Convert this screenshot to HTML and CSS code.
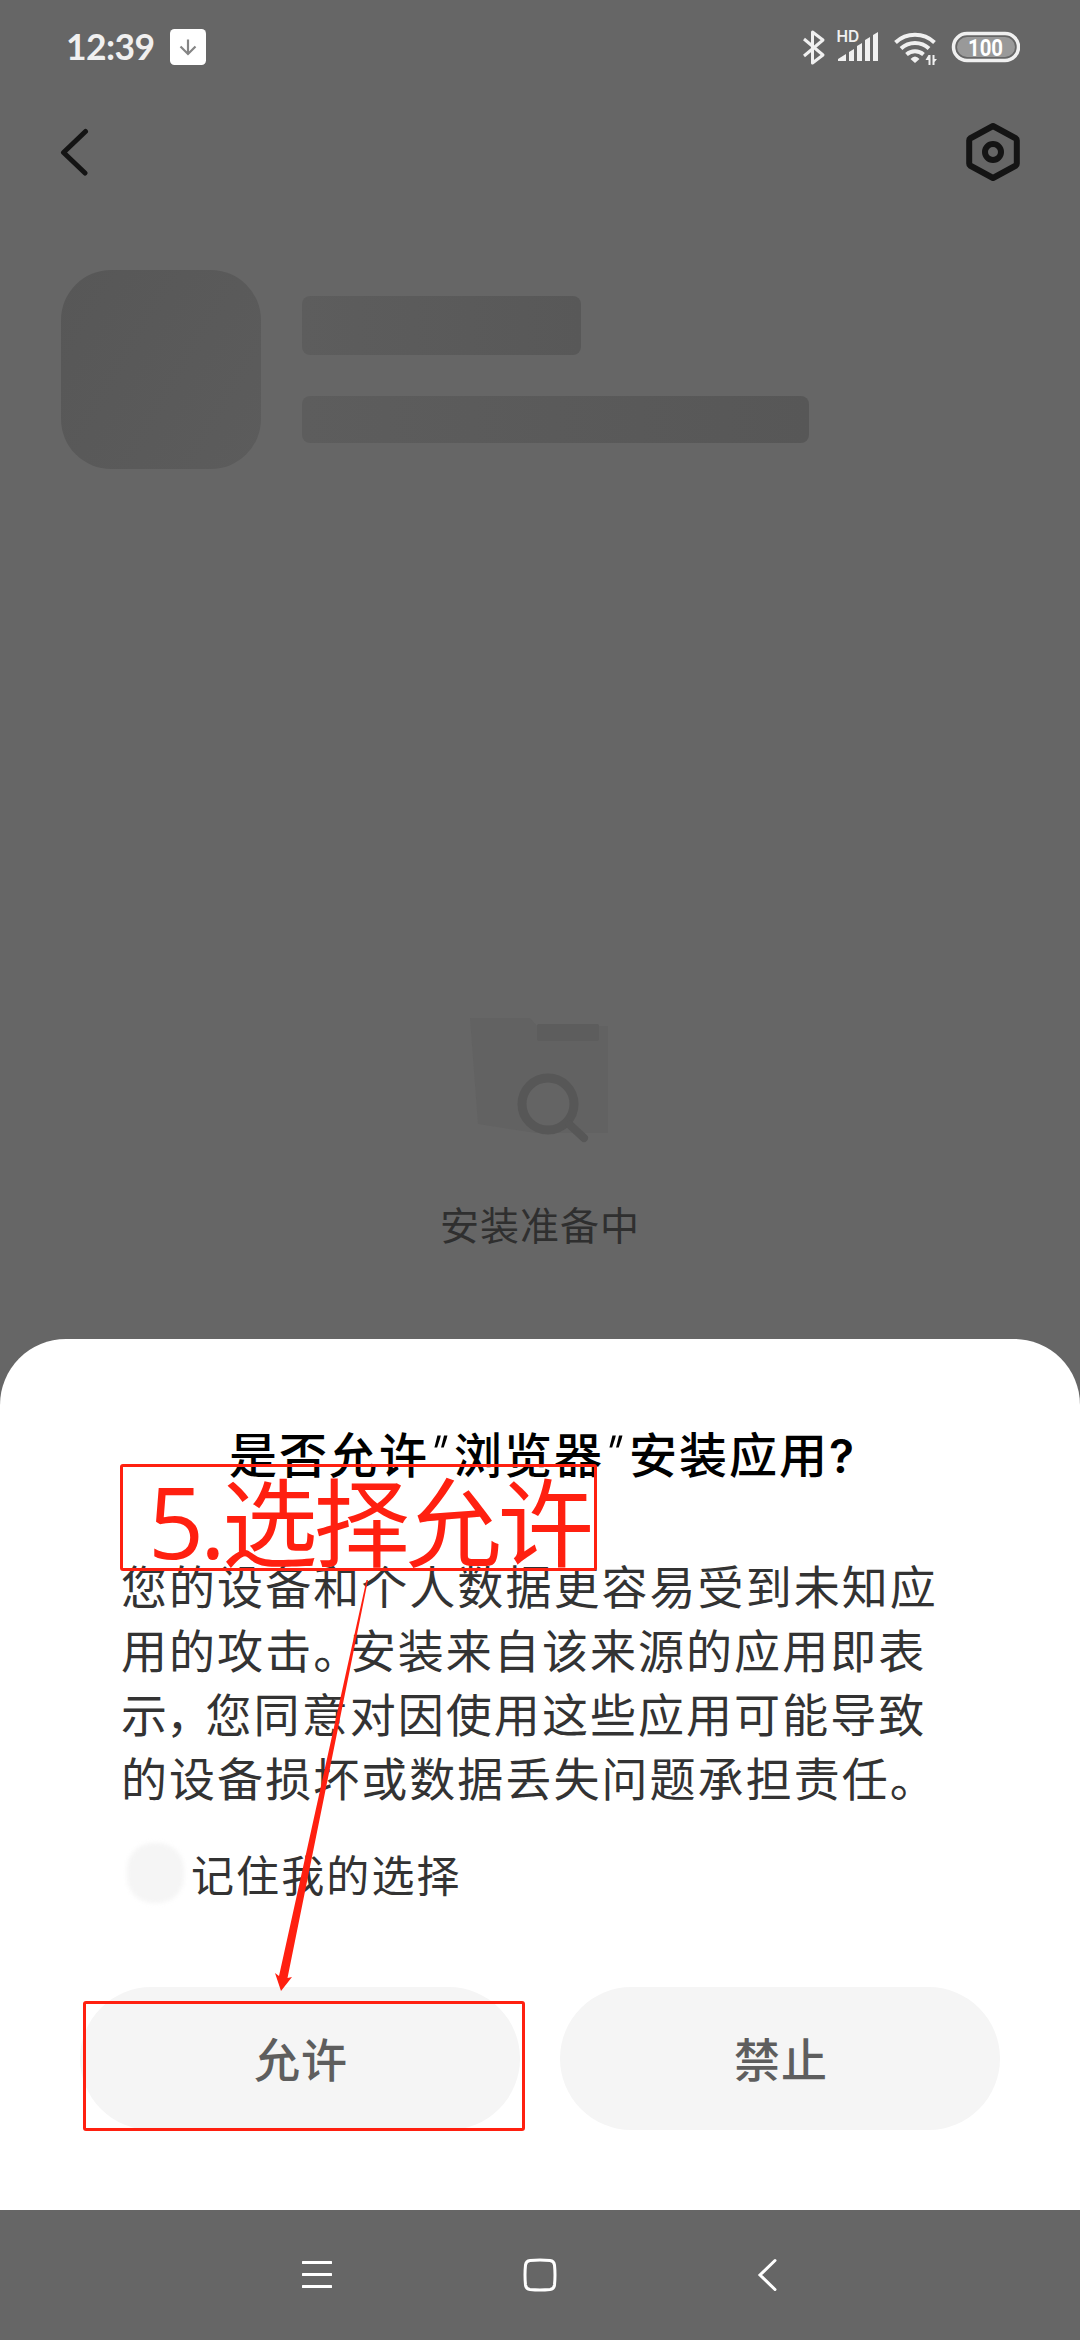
FILE: index.html
```html
<!DOCTYPE html>
<html lang="zh-CN">
<head>
<meta charset="utf-8">
<title>安装应用</title>
<link rel="stylesheet" href="styles.css">
</head>
<body>
<div class="screen">
  <header class="status">
    <span class="clock">12:39</span>
    <svg class="download" width="36" height="36" viewBox="0 0 36 36"><rect width="36" height="36" rx="4.5" fill="#fff"/><path d="M18 10.500V25M10.500 17.500L18 25l7.500-7.500" fill="none" stroke="#858585" stroke-width="2.200"/></svg>
    <svg class="signals" width="220" height="40" viewBox="800 26 220 40">
      <path d="M804 39l19 16-10.500 8V32L823 40 804 56" fill="none" stroke="#f0f0f0" stroke-width="3" stroke-linejoin="round"/>
      <text class="hd" x="836.500" y="41.500">HD</text>
      <path d="M838 61v-2l8-5v7zM849 61v-9l5-3v12zM857 61V46l5-3v18zM865 61V40l5-3v24zM873 61V35l5-3v29z" fill="#f0f0f0"/>
      <g fill="none" stroke="#f0f0f0" stroke-width="4"><path d="M895.500 42.500a28.500 28.500 0 0 1 39 0"/><path d="M901 48.500a20.500 20.500 0 0 1 28 0"/><path d="M906.500 54.500a13 13 0 0 1 17 0"/></g>
      <path d="M910.500 59q4.500-5 9 0l-4.500 4zM928.500 55h2v10h-2v-5h-3zM932.500 55h2v4h2.500l-2.500 3v3h-2z" fill="#f0f0f0"/>
      <rect x="953.500" y="33.500" width="65" height="27" rx="13.500" fill="none" stroke="#f0f0f0" stroke-width="3.500"/>
      <rect x="957" y="37" width="58" height="20" rx="10" fill="#999"/>
      <text class="charge" x="968" y="55.500" textLength="35" lengthAdjust="spacingAndGlyphs">100</text>
    </svg>
  </header>
  <nav class="toolbar">
    <svg width="30" height="50" viewBox="60 127 30 50"><path d="M85.500 131.500L63.500 152.500l21.500 20.500" fill="none" stroke="#141414" stroke-width="5" stroke-linecap="round" stroke-linejoin="round"/></svg>
    <svg width="56" height="60" viewBox="965 122 56 60"><g fill="none" stroke="#141414"><path d="M993 126l23 12.500q.8.500.8 2v23q0 1.500-.8 2L993 178l-23-12.500q-.8-.5-.8-2v-23q0-1.500.8-2z" stroke-width="6" stroke-linejoin="round"/><circle cx="993" cy="152" r="8" stroke-width="6"/></g></svg>
  </nav>
  <section class="app">
    <div class="app-icon"></div>
    <div class="app-lines"><div class="app-name"></div><div class="app-meta"></div></div>
  </section>
  <section class="progress">
    <svg width="180" height="150" viewBox="450 1000 180 150">
      <path d="M470 1018h60l7 8h71v107H536l-58-9z" fill="#626262"/>
      <rect x="537" y="1024" width="62" height="17" rx="2" fill="#5d5d5d"/>
      <circle cx="548" cy="1104" r="26" fill="#646464" stroke="#575757" stroke-width="9"/>
      <path d="M570 1125l14 13" stroke="#575757" stroke-width="8" stroke-linecap="round"/>
    </svg>
    <p>安装准备中</p>
  </section>
  <main class="sheet">
    <h1 class="title">是否允许<span class="quote">"</span>浏览器<span class="quote">"</span>安装应用<span class="ask">?</span></h1>
    <p class="message">您的设备和个人数据更容易受到未知应<br>用的攻击<span class="punct">。</span>安装来自该来源的应用即表<br>示<span class="punct comma">，</span>您同意对因使用这些应用可能导致<br>的设备损坏或数据丢失问题承担责任<span class="punct">。</span></p>
    <label class="remember"><span class="check"></span><span>记住我的选择</span></label>
    <div class="actions"><button>允许</button><button>禁止</button></div>
  </main>
  <footer class="navbar">
    <svg width="30" height="34" viewBox="302 2258 30 34"><path d="M303 2262.500h28M303 2274.500h28M303 2286.500h28" stroke="#fff" stroke-width="3" stroke-linecap="round"/></svg>
    <svg width="34" height="34" viewBox="523 2258 34 34"><path d="M530 2260.500q10-1 20 0 4 .5 4.500 4.500 1 10 0 20-.5 4-4.500 4.500-10 1-20 0-4-.5-4.500-4.500-1-10 0-20 .5-4 4.500-4.500z" fill="none" stroke="#fff" stroke-width="3"/></svg>
    <svg width="20" height="34" viewBox="757 2258 20 34"><path d="M775 2260.500L760 2275l15 14.500" fill="none" stroke="#fff" stroke-width="3" stroke-linecap="round"/></svg>
  </footer>
  <div class="step"><span class="num">5.</span>选择允许</div>
  <div class="target"></div>
  <svg class="arrow" width="110" height="420" viewBox="270 1575 110 420"><path d="M366.500 1580h1.500L287.500 1978l4.500-1-11 14-6-18 4 3z" fill="#ff2010"/></svg>
</div>
</body>
</html>
```
FILE: styles.css
```css
* { box-sizing: border-box; }
body { margin: 0; font-family: "Noto Sans CJK SC", sans-serif; }
h1, p { margin: 0; }
.screen { position: relative; width: 1080px; height: 2340px; display: flex; flex-direction: column; background: #666; overflow: hidden; }
.status { display: flex; height: 96px; padding: 26px 60px 0 66px; align-items: flex-start; }
.clock { width: 104px; font: 700 35.5px/42px Lato, sans-serif; letter-spacing: -0.6px; color: #f0f0f0; }
.download { margin-top: 3px; }
.signals { margin-left: auto; }
.hd { font: 600 15.5px Inter, sans-serif; fill: #f0f0f0; }
.charge { font: 700 24px Roboto, sans-serif; fill: #fff; }
.toolbar { display: flex; justify-content: space-between; align-items: center; height: 112px; padding: 0 59px 0 60px; }
.app { display: flex; gap: 41px; padding: 62px 61px 0; }
.app-icon { width: 200px; height: 199px; border-radius: 50px; background: linear-gradient(120deg, #575757, #5c5c5c); }
.app-lines { display: flex; flex-direction: column; gap: 41px; padding-top: 26px; }
.app-name { width: 279px; height: 59px; border-radius: 8px; background: linear-gradient(90deg, #5d5d5d, #585858); }
.app-meta { width: 507px; height: 47px; border-radius: 8px; background: linear-gradient(90deg, #5d5d5d, #575757); }
.progress { display: flex; flex-direction: column; align-items: center; margin-top: 531px; height: 339px; }
.progress p { margin-top: 48px; font-size: 39px; line-height: 50px; letter-spacing: 1px; color: #2f2f2f; }
.sheet { height: 871px; padding: 81px 80px 0; border-radius: 66px 66px 0 0; background: #fff; }
.title { font-size: 48px; line-height: 64px; font-weight: 500; letter-spacing: 2px; color: #000; white-space: nowrap; padding-left: 149px; }
.quote { display: inline-block; width: 25px; padding-right: 9px; font-family: Roboto, sans-serif; font-size: 50px; font-weight: 400; letter-spacing: 0; line-height: 1; text-align: center; transform: skewX(-14deg); }
.ask { font-family: Inter, sans-serif; font-weight: 600; font-size: 46px; line-height: 1; }
.message { margin: 68px 0 0 41px; font-size: 46px; line-height: 64px; letter-spacing: 2.050px; color: #333; white-space: nowrap; }
.punct { letter-spacing: -9.500px; }
.comma { position: relative; left: -3px; }
.remember { display: flex; align-items: center; gap: 7px; margin: 35px 0 0 47px; height: 60px; font-size: 43px; letter-spacing: 2.100px; line-height: 60px; color: #333; }
.check { width: 57px; height: 60px; border-radius: 26px; background: #f5f5f5; filter: blur(2px); }
.actions { display: flex; gap: 40px; margin-top: 84px; }
.actions button { width: 440px; height: 143px; padding: 0 0 3px 2px; border: 0; border-radius: 72px; background: #f5f5f5; font: 500 46px/60px "Noto Sans CJK SC", sans-serif; letter-spacing: 1px; color: #5e5e5e; }
.navbar { display: grid; grid-template-columns: 30px 34px 20px; column-gap: 191px; align-items: center; height: 130px; padding-left: 302px; }
.navbar svg:last-child { margin-left: 9px; }
.step { position: absolute; left: 120px; top: 1464px; width: 477px; height: 107px; padding-left: 25px; border: 3px solid #ff2010; border-radius: 3px; font-size: 96px; line-height: 101px; letter-spacing: -4px; color: #ff2010; white-space: nowrap; }
.num { font-family: "Open Sans", sans-serif; font-size: 98px; line-height: 1; }
.target { position: absolute; left: 83px; top: 2001px; width: 442px; height: 130px; border: 3px solid #ff2010; border-radius: 3px; }
.arrow { position: absolute; left: 270px; top: 1575px; }
```
